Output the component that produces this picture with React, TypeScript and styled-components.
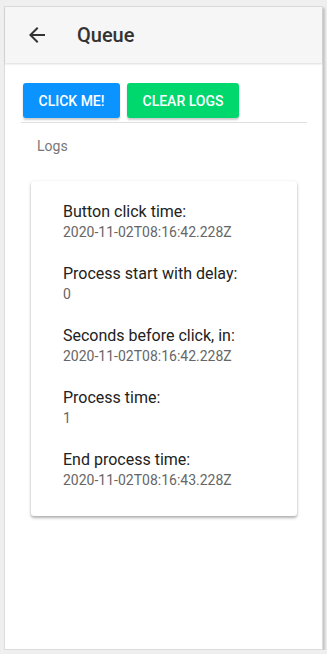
import styled, { createGlobalStyle } from "styled-components";

const GlobalStyle = createGlobalStyle`
  html, body {
    margin: 0;
    padding: 0;
    background: #efefef;
    font-family: Roboto, "Liberation Sans", sans-serif;
  }
`;

const Frame = styled.div`
  margin: 6px 0 0 4px;
  width: 317px;
  height: 642px;
  background: #fff;
  border: 1px solid #dcdcdc;
  box-shadow: 2px 2px 2px rgba(0, 0, 0, 0.18);
  display: flex;
  flex-direction: column;
`;

const Header = styled.div`
  height: 56px;
  background: #f6f6f6;
  display: flex;
  align-items: center;
  padding-left: 20px;
  box-shadow: 0 1px 2px rgba(0, 0, 0, 0.15);
`;

const BackButton = styled.div`
  width: 24px;
  height: 24px;
  display: flex;
  align-items: center;
  justify-content: center;
  color: #333;
  margin-right: 28px;
`;

const Title = styled.div`
  font-size: 20px;
  font-weight: 500;
  color: #333;
`;

const Content = styled.div`
  padding: 20px 15px 0 16px;
`;

const ButtonRow = styled.div`
  display: flex;
  gap: 7px;
  padding: 0 0 4px 2px;
  border-bottom: 1px solid #e0e0e0;
`;

const ActionButton = styled.button<{ $bg: string }>`
  height: 35px;
  padding: 0 15.5px;
  border: none;
  border-radius: 3px;
  background: ${(p) => p.$bg};
  color: #fff;
  font-family: Roboto, "Liberation Sans", sans-serif;
  font-size: 14px;
  font-weight: 500;
  text-transform: uppercase;
  box-shadow: 0 2px 2px rgba(0, 0, 0, 0.2);
`;

const LogsLabel = styled.div`
  margin: 13px 0 0 16px;
  font-size: 14px;
  line-height: 20px;
  color: #777;
`;

const Card = styled.div`
  margin: 25px 10px 0 10px;
  padding: 21px 20px 26px 32px;
  background: #fff;
  border-radius: 3px;
  box-shadow: 0 2px 3px rgba(0, 0, 0, 0.3), 0 0 2px rgba(0, 0, 0, 0.08);
  display: flex;
  flex-direction: column;
  gap: 22px;
`;

const LogItem = styled.div`
  display: flex;
  flex-direction: column;
`;

const LogName = styled.div`
  font-size: 16px;
  line-height: 20px;
  color: #222;
`;

const LogValue = styled.div`
  font-size: 14px;
  line-height: 20px;
  color: #666;
`;

const logs = [
  { name: "Button click time:", value: "2020-11-02T08:16:42.228Z" },
  { name: "Process start with delay:", value: "0" },
  { name: "Seconds before click, in:", value: "2020-11-02T08:16:42.228Z" },
  { name: "Process time:", value: "1" },
  { name: "End process time:", value: "2020-11-02T08:16:43.228Z" },
];

function App() {
  return (
    <>
      <GlobalStyle />
      <Frame>
        <Header>
          <BackButton>
            <svg width="24" height="24" viewBox="0 0 24 24">
              <path
                fill="currentColor"
                d="M20 11H7.83l5.59-5.59L12 4l-8 8 8 8 1.41-1.41L7.83 13H20v-2z"
              />
            </svg>
          </BackButton>
          <Title>Queue</Title>
        </Header>
        <Content>
          <ButtonRow>
            <ActionButton $bg="#0b93ff">Click me!</ActionButton>
            <ActionButton $bg="#00d86d">Clear logs</ActionButton>
          </ButtonRow>
          <LogsLabel>Logs</LogsLabel>
          <Card>
            {logs.map((log) => (
              <LogItem key={log.name}>
                <LogName>{log.name}</LogName>
                <LogValue>{log.value}</LogValue>
              </LogItem>
            ))}
          </Card>
        </Content>
      </Frame>
    </>
  );
}

export default App;
